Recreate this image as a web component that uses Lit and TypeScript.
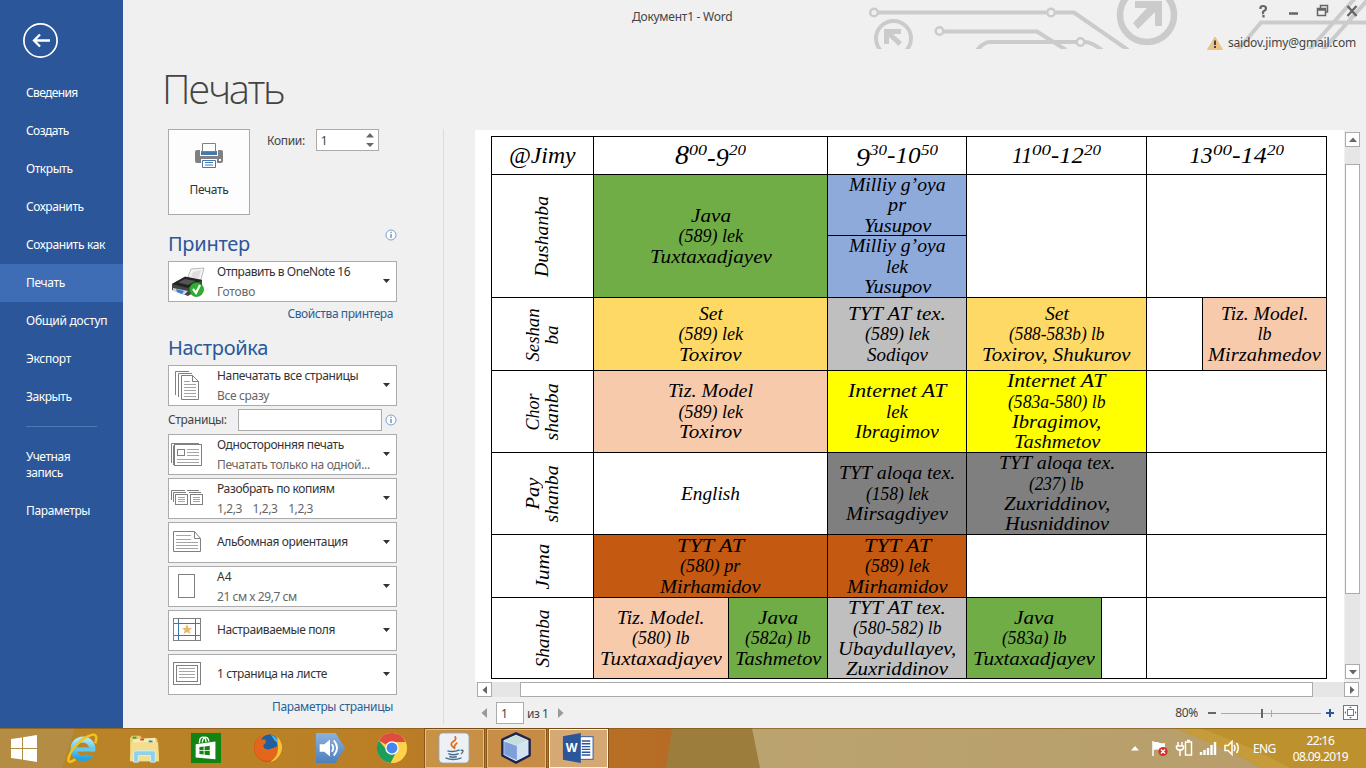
import { LitElement, html, svg, css, nothing } from "lit";
import { customElement, property, query } from "lit/decorators.js";

/** One line of text that takes exactly `w` pixels, by tracking or by stretching its letters. */
@customElement("fit-text")
class FitText extends LitElement {
  @property({ type: Number }) w = 0;
  @property() t = "";
  @property({ type: Boolean }) stretch = false;
  @query("span") span!: HTMLElement;
  static styles = css`
    :host { display: inline-block; white-space: pre; }
    span { display: inline-block; transform-origin: 0 50%; }
  `;
  updated() {
    this.style.letterSpacing = "0px";
    const natural = this.span.offsetWidth;
    if (!this.w || !natural) return;
    if (this.stretch) {
      this.style.width = this.w + "px";
      this.span.style.transform = `scaleX(${this.w / natural})`;
    } else {
      this.style.letterSpacing = (this.w - natural) / this.t.length + "px";
    }
  }
  render() {
    return html`<span>${this.t}</span>`;
  }
}

type Line = [string, number];
const fit = (l: Line) => html`<fit-text .t=${l[0]} .w=${l[1]}></fit-text>`;
const wide = (l: Line, cls = "") => html`<fit-text class=${cls} stretch .t=${l[0]} .w=${l[1]}></fit-text>`;

@customElement("side-bar")
class SideBar extends LitElement {
  static styles = css`
    :host { display: block; width: 123px; height: 728px; background: #2b579a; color: #fff; font: 12px/16px "Noto Sans", sans-serif; }
    .back { display: block; padding: 22px 0 14px 22px; }
    .item { height: 38px; padding-left: 26px; display: flex; align-items: center; }
    .item.on { background: #3e6db5; }
    .rule { height: 1px; background: #5078b3; margin: 10px 26px 22px; }
    .two { display: flex; flex-direction: column; align-items: flex-start; padding-left: 26px; height: 43px; }
  `;
  render() {
    const items: Line[] = [["Сведения", 52], ["Создать", 43], ["Открыть", 47], ["Сохранить", 58], ["Сохранить как", 79], ["Печать", 39], ["Общий доступ", 81], ["Экспорт", 45], ["Закрыть", 46]];
    return html`
      <svg class="back" width="38" height="38" viewBox="0 0 38 38" fill="none" stroke="#fff">
        <circle cx="18.5" cy="18.5" r="16.6" stroke-width="1.7" />
        <path d="M28 18.500H12M18 12.500L12 18.500L18 24.500" stroke-width="2.300" />
      </svg>
      ${items.map((i) => html`<div class="item ${i[0] === "Печать" ? "on" : ""}">${fit(i)}</div>`)}
      <div class="rule"></div>
      <div class="two">${fit(["Учетная", 44])}${fit(["запись", 37])}</div>
      <div class="item">${fit(["Параметры", 64])}</div>
    `;
  }
}

@customElement("title-bar")
class TitleBar extends LitElement {
  static styles = css`
    :host { display: block; position: relative; height: 64px; color: #444; font: 12px/16px "Noto Sans", sans-serif; }
    .deco { position: absolute; right: 0; top: 0; }
    .row { position: relative; display: flex; height: 33px; align-items: center; }
    .name { margin-left: 509px; }
    .ctl { margin-left: auto; margin-right: 6px; margin-top: -10px; }
    .user { position: relative; display: flex; justify-content: flex-end; align-items: center; padding-right: 10px; gap: 5px; height: 19px; }
  `;
  render() {
    return html`
      <svg class="deco" width="506" height="49" viewBox="0 0 506 49" fill="none" stroke="#cbcbcb" stroke-width="4">
        <path d="M18 12.500H186M196 12.500H214L268 50" />
        <circle cx="14" cy="12.500" r="3.800" stroke-width="2.500" /><circle cx="191" cy="12.500" r="3.800" stroke-width="2.500" />
        <path d="M84 31.500H177L206 50" /><circle cx="79.500" cy="31" r="3.800" stroke-width="2.500" />
        <path d="M117 50Q124 42 130 42H216M225 42Q231 42 242 50" /><circle cx="220.500" cy="42" r="3.800" stroke-width="2.500" />
        <circle cx="33.500" cy="38.500" r="17.500" />
        <g fill="#cbcbcb" stroke="none">
          <path d="M24 29H41V34H33L42 42L38.500 46L29 37V44H24Z" />
          <path d="M275 1H302V26H295V12L278 29L273 23L287 8H275Z" />
        </g>
        <circle cx="287" cy="15" r="27" stroke-width="6.500" />
        <path d="M378 50L401 22.500H506M449 50L497 -4M463 50L511 -4" />
      </svg>
      <div class="row">
        <span class="name">${fit(["Документ1 - Word", 100])}</span>
        <svg class="ctl" width="102" height="16" viewBox="0 0 102 16" fill="none" stroke="#666" stroke-width="1.500">
          <path d="M2.500 5V3.500Q2.500 2 5 2Q8 2 8 4.500Q8 6 6 7T5.500 10M5.500 11V13.500" stroke-width="2.200" />
          <path d="M31 9.500H40" stroke-width="2.500" />
          <path d="M59.500 4.500H67.500V11.500H59.500ZM62.500 4V1.500H69.500V8H68M60 6H67" />
          <path d="M89.500 2L98.500 12M98.500 2L89.500 12" stroke-width="2.400" />
        </svg>
      </div>
      <div class="user">
        <svg width="16" height="14" viewBox="0 0 16 14"><path d="M8 1L15.500 13.500H.5Z" fill="#ebc382" stroke="#ebc382" stroke-linejoin="round" /><path d="M8 4.500V9M8 10V12" stroke="#444" stroke-width="2" /></svg>
        ${fit(["saidov.jimy@gmail.com", 128])}
      </div>
    `;
  }
}

const page = (x: number, y: number, w: number, h: number) =>
  svg`<rect x=${x + 0.5} y=${y + 0.5} width=${w} height=${h} fill="#fff" stroke="#808080"/>`;

const icons: Record<string, unknown> = {
  printer: svg`<g transform="translate(0 6)">
    <path d="M17 10L20 2L33 1L29 16Z" fill="#f4f4f4" stroke="#aaa" stroke-width=".8"/><path d="M19 12L22 5L30 3L27 14Z" fill="#ddd"/>
    <path d="M1 17L14 9.500L31 13V20L17 29L1 23Z" fill="#444"/><path d="M1 17L14 10L31 13L17 21Z" fill="#222"/><path d="M7 15.500L14 12L25 14L17 18Z" fill="#555"/>
    <path d="M2 21L17 24L13 28L2 24Z" fill="#c9d6ea"/><path d="M5 22L13 24L11 27L6 25Z" fill="#3b7dcc"/>
    <circle cx="25.500" cy="22.500" r="7" fill="#2fae2f" stroke="#178b17" stroke-width=".7"/><path d="M22 22L25 26L29 18" fill="none" stroke="#fff" stroke-width="2.200"/></g>`,
  pages: svg`<g fill="none" stroke="#808080" transform="translate(0 2)"><path d="M4.500 28V4.500H18M7.500 30V6.500H21M10.500 31.500V8.500"/><path d="M10.500 8.500H21.500L27.500 14.500V32.500H10.500ZM21.500 8.500V14.500H27.500" fill="#fff"/><path d="M13 14.500H19M13 17.500H25M13 20.500H25M13 23.500H25M13 26.500H25M13 29.500H25" stroke="#a5a5a5"/></g>`,
  onesided: svg`<g fill="none" stroke="#808080" transform="translate(0 3)"><path d="M.5 26V6.500H28M2.500 28V8.500"/><rect x="3.500" y="7.500" width="27" height="21" fill="#fff"/><rect x="6.500" y="12.500" width="7" height="6"/><path d="M16 12.500H28M16 15.500H28M16 18.500H28M6 22.500H28M6 25.500H28" stroke="#a5a5a5"/></g>`,
  collate: svg`<g fill="none" stroke="#808080" transform="translate(0 3)"><path d="M.5 19V9.500H14M2.500 21V11.500H15M16 9.500H28M18 11.500H30"/>${page(4, 13, 12, 10)}${page(19, 13, 12, 10)}<path d="M7 16.500H14M7 18.500H14M7 20.500H14M22 16.500H29M22 18.500H29M22 20.500H29" stroke="#a5a5a5"/></g>`,
  landscape: svg`<g fill="none" stroke="#808080" transform="translate(0 1)"><path d="M2.500 8.500H23.500L29.500 15.500V28.500H2.500ZM23.500 8.500V15.500H29.500"/><path d="M5 12.500H20M5 16.500H20M5 19.500H27M5 22.500H27M5 25.500H27" stroke="#a5a5a5"/></g>`,
  sheet: page(7, 8, 16, 23),
  margins: svg`<g transform="translate(0 1)">${page(2, 7, 27, 22)}<path d="M3 12.500H29M3 24.500H29M7.500 8V29M24.500 8V29" stroke="#3b7aa8"/><path d="M16 13L17.500 17H21L18.300 19.400L19.400 23L16 21L12.600 23L13.700 19.400L11 17H14.500Z" fill="#eab86a"/></g>`,
  onepage: svg`<g transform="translate(0 1)">${page(2, 7, 27, 22)}${page(5, 10, 21, 16)}<path d="M8 13.500H24M8 16.500H24M8 19.500H24M8 22.500H24" stroke="#a5a5a5"/></g>`,
};

@customElement("option-box")
class OptionBox extends LitElement {
  @property() icon = "";
  @property({ attribute: false }) a: Line = ["", 0];
  @property({ attribute: false }) b?: Line;
  static styles = css`
    :host { display: flex; box-sizing: border-box; width: 229px; height: 41px; border: 1px solid #ababab; background: #fff; color: #333; font: 12px/20px "Noto Sans", sans-serif; }
    .ico { flex: none; margin: -1px 12px 0 2px; }
    .tx { flex: 1; display: flex; flex-direction: column; align-items: flex-start; }
    .tx.single { padding-top: 9px; }
    .sub { color: #666; }
    .arr { margin: 17px 6px 0 0; }
  `;
  render() {
    return html`
      <svg class="ico" width="34" height="40" viewBox="0 0 34 40">${icons[this.icon]}</svg>
      <div class="tx ${this.b ? "" : "single"}">${fit(this.a)}${this.b ? html`<span class="sub">${fit(this.b)}</span>` : nothing}</div>
      <svg class="arr" width="7" height="4" viewBox="0 0 7 4"><path d="M0 0H7L3.500 4Z" fill="#333" /></svg>
    `;
  }
}

const info = html`<svg width="12" height="12" viewBox="0 0 12 12"><circle cx="6" cy="6" r="5" fill="#fff" stroke="#7d9fcc" /><path d="M6 5V9M6 2.700V4" stroke="#4c7ab5" stroke-width="1.200" /></svg>`;

@customElement("print-settings")
class PrintSettings extends LitElement {
  static styles = css`
    :host { display: block; width: 229px; padding-left: 45px; color: #444; font: 12px/16px "Noto Sans", sans-serif; }
    .title { margin: 0 0 0 -6px; font: 300 40px/50px "Open Sans", "Noto Sans", sans-serif; height: 65px; }
    .top { display: flex; height: 86px; }
    .btn { box-sizing: border-box; width: 82px; height: 86px; background: #fdfdfd; border: 1px solid #ababab; display: flex; flex-direction: column; align-items: center; padding-top: 13px; gap: 13px; color: #333; }
    .lab { margin: 4px 11px 0 17px; }
    .num { box-sizing: border-box; width: 63px; height: 22px; border: 1px solid #ababab; background: #fff; display: flex; justify-content: space-between; padding: 3px 4px 0 4px; }
    .head { display: flex; justify-content: space-between; align-items: flex-start; color: #2b579a; font: 20px/30px "Noto Sans", sans-serif; }
    .h1 { height: 32px; margin-top: 14px; }
    .h2 { height: 32px; }
    .link { display: flex; justify-content: flex-end; padding-right: 4px; color: #2b6094; }
    .l1 { height: 27px; padding-top: 4px; }
    .l2 { padding-top: 4px; }
    .pages { display: flex; height: 22px; margin: 3px 0; align-items: center; justify-content: space-between; }
    .field { box-sizing: border-box; width: 144px; height: 22px; border: 1px solid #ababab; background: #fff; margin-left: 11px; margin-right: 3px; }
    .gap { display: flex; flex-direction: column; gap: 3px; }
  `;
  render() {
    return html`
      <div class="title">${fit(["Печать", 122])}</div>
      <div class="top">
        <div class="btn">
          <svg width="30" height="26" viewBox="0 0 30 26">
            <path d="M3 7H27Q29 7 29 9V18Q29 20 27 20H3Q1 20 1 18V9Q1 7 3 7Z" fill="#808080" />
            <path d="M6 6H24V13H6Z" fill="#fdfdfd" /><path d="M7 8H23V12H7Z" fill="#4379ae" />
            <path d="M8.500 .5H21.500V8.500H8.500Z" fill="#fff" stroke="#808080" />
            <path d="M7 16H23V26H7Z" fill="#fdfdfd" /><path d="M8.500 17.500H21.500V24.500H8.500Z" fill="#fff" stroke="#4379ae" />
            <path d="M11 19.500H19M11 22H19" stroke="#4379ae" /><rect x="25" y="16" width="2" height="2" fill="#fff" />
          </svg>
          ${fit(["Печать", 39])}
        </div>
        <span class="lab">${fit(["Копии:", 38])}</span>
        <div class="num"><span>1</span><svg width="8" height="14" viewBox="0 0 8 14"><path d="M0 4.500L4 0L8 4.500ZM0 10L4 14L8 10Z" fill="#666" /></svg></div>
      </div>
      <div class="head h1">${fit(["Принтер", 82])}${info}</div>
      <option-box icon="printer" .a=${["Отправить в OneNote 16", 133]} .b=${["Готово", 38]}></option-box>
      <div class="link l1">${fit(["Свойства принтера", 106])}</div>
      <div class="head h2">${fit(["Настройка", 100])}</div>
      <option-box icon="pages" .a=${["Напечатать все страницы", 141]} .b=${["Все сразу", 52]}></option-box>
      <div class="pages">${fit(["Страницы:", 59])}<div class="field"></div>${info}</div>
      <div class="gap">
        <option-box icon="onesided" .a=${["Односторонняя печать", 127]} .b=${["Печатать только на одной...", 153]}></option-box>
        <option-box icon="collate" .a=${["Разобрать по копиям", 118]} .b=${["1,2,3    1,2,3    1,2,3", 96]}></option-box>
        <option-box icon="landscape" .a=${["Альбомная ориентация", 131]}></option-box>
        <option-box icon="sheet" .a=${["A4", 15]} .b=${["21 см x 29,7 см", 80]}></option-box>
        <option-box icon="margins" .a=${["Настраиваемые поля", 118]}></option-box>
        <option-box icon="onepage" .a=${["1 страница на листе", 110]}></option-box>
      </div>
      <div class="link l2">${fit(["Параметры страницы", 121])}</div>
    `;
  }
}

const cell = (cls: string, ...lines: Line[]) => html`<div class="cell ${cls}">${lines.map((l) => wide(l))}</div>`;
const day = (...lines: Line[]) => html`<div class="cell"><div class="turn">${lines.map((l) => wide(l))}</div></div>`;
/** Tall figures rise above the line, "low" ones hang below it, the rest are of lowercase height. */
const hour = (a: Line, ac: string, b: Line, c: Line, cc: string, d: Line) =>
  html`<div class="cell hour"><span class="hr">${wide(a, ac)}<sup>${wide(b)}</sup>${wide(c, cc)}<sup>${wide(d)}</sup></span></div>`;

@customElement("time-table")
class TimeTable extends LitElement {
  static styles = css`
    :host { display: grid; width: 834px; padding: 1px; gap: 1px; background: #000; color: #000;
      grid-template-columns: 101px 233px 138px 179px 179px; grid-template-rows: 37px 122px 72px 81px 81px 62px 80px;
      font: italic 18px/20.4px "Liberation Serif", serif; }
    .cell { box-sizing: border-box; padding-top: 1px; background: #fff; display: flex; flex-direction: column; align-items: center; justify-content: center; min-width: 0; min-height: 0; overflow: hidden; }
    .split { display: grid; gap: 1px; min-height: 0; }
    .v { grid-template-rows: 60px 61px; }
    .s1 { grid-template-columns: 55px 123px; }
    .s2 { grid-template-columns: 134px 98px; }
    .s3 { grid-template-columns: 134px 44px; }
    .turn { transform: rotate(-90deg); display: flex; flex-direction: column; align-items: center; line-height: 19px; flex: none; }
    .jimy { font-size: 23px; }
    .hour { font-size: 23px; line-height: 34px; }
    .hr { display: flex; align-items: center; }
    .tall { font-size: 28px; margin-top: -3px; }
    .low { font-size: 26px; margin-top: 4px; }
    .hour sup { font-size: 14px; line-height: 16px; margin: -11px 0 0; vertical-align: baseline; }
    .green { background: #70ad47; }
    .blue { background: #8eaadb; }
    .gold { background: #ffd966; }
    .silver { background: #bfbfbf; }
    .peach { background: #f7caac; }
    .yellow { background: #ffff00; }
    .gray { background: #7f7f7f; }
    .rust { background: #c45911; }
  `;
  render() {
    return html`
      ${cell("jimy", ["@Jimy", 67])}
      ${hour(["8", 14], "tall", ["00", 18], ["-9", 22], "low", ["20", 17])}
      ${hour(["9", 14], "low", ["30", 17], ["-10", 34], "", ["50", 17])}
      ${hour(["11", 20], "", ["00", 19], ["-12", 33], "", ["20", 17])}
      ${hour(["13", 23], "", ["00", 19], ["-14", 35], "", ["20", 17])}

      ${day(["Dushanba", 81])}
      ${cell("green", ["Java", 40], ["(589) lek", 64], ["Tuxtaxadjayev", 122])}
      <div class="split v">
        ${cell("blue", ["Milliy g’oya", 96], ["pr", 18], ["Yusupov", 67])}
        ${cell("blue", ["Milliy g’oya", 96], ["lek", 22], ["Yusupov", 67])}
      </div>
      ${cell("")}${cell("")}

      ${day(["Seshan", 53], ["ba", 19])}
      ${cell("gold", ["Set", 24], ["(589) lek", 64], ["Toxirov", 63])}
      ${cell("silver", ["TYT AT tex.", 98], ["(589) lek", 64], ["Sodiqov", 61])}
      ${cell("gold", ["Set", 24], ["(588-583b) lb", 95], ["Toxirov, Shukurov", 149])}
      <div class="split s1">${cell("")}${cell("peach", ["Tiz. Model.", 88], ["lb", 14], ["Mirzahmedov", 113])}</div>

      ${day(["Chor", 37], ["shanba", 57])}
      ${cell("peach", ["Tiz. Model", 85], ["(589) lek", 64], ["Toxirov", 63])}
      ${cell("yellow", ["Internet AT", 99], ["lek", 22], ["Ibragimov", 84])}
      ${cell("yellow", ["Internet AT", 99], ["(583a-580) lb", 97], ["Ibragimov,", 89], ["Tashmetov", 86])}
      ${cell("")}

      ${day(["Pay", 32], ["shanba", 57])}
      ${cell("", ["English", 59])}
      ${cell("gray", ["TYT aloqa tex.", 116], ["(158) lek", 62], ["Mirsagdiyev", 102])}
      ${cell("gray", ["TYT aloqa tex.", 116], ["(237) lb", 55], ["Zuxriddinov,", 106], ["Husniddinov", 104])}
      ${cell("")}

      ${day(["Juma", 46])}
      ${cell("rust", ["TYT AT", 67], ["(580) pr", 61], ["Mirhamidov", 101])}
      ${cell("rust", ["TYT AT", 67], ["(589) lek", 64], ["Mirhamidov", 101])}
      ${cell("")}${cell("")}

      ${day(["Shanba", 58])}
      <div class="split s2">
        ${cell("peach", ["Tiz. Model.", 88], ["(580) lb", 58], ["Tuxtaxadjayev", 122])}
        ${cell("green", ["Java", 40], ["(582a) lb", 66], ["Tashmetov", 86])}
      </div>
      ${cell("silver", ["TYT AT tex.", 98], ["(580-582) lb", 88], ["Ubaydullayev,", 118], ["Zuxriddinov", 102])}
      <div class="split s3">${cell("green", ["Java", 40], ["(583a) lb", 65], ["Tuxtaxadjayev", 122])}${cell("")}</div>
      ${cell("")}
    `;
  }
}

const tri = (d: string) => html`<div class="sb"><svg width="8" height="8" viewBox="0 0 8 8"><path d=${d} fill="#666" /></svg></div>`;
const L = "M6 0V8L1.500 4Z", R = "M2 0V8L6.500 4Z", U = "M0 6H8L4 1.500Z", D = "M0 2H8L4 6.500Z";

@customElement("preview-pane")
class PreviewPane extends LitElement {
  static styles = css`
    :host { display: flex; flex-direction: column; width: 891px; color: #444; font: 12px/16px "Noto Sans", sans-serif; }
    .view { display: flex; height: 552px; }
    .paper { width: 869px; box-sizing: border-box; padding: 6px 0 0 16px; background: #fff; }
    .sb { box-sizing: border-box; width: 15px; height: 15px; border: 1px solid #ababab; background: #fff; display: flex; align-items: center; justify-content: center; flex: none; }
    .vs { width: 15px; margin: 2px 0 3px 1px; background: #e6e6e6; display: flex; flex-direction: column; }
    .vt { box-sizing: border-box; height: 430px; margin: 17px 0 auto; border: 1px solid #ababab; background: #fff; }
    .hs { display: flex; width: 882px; height: 15px; margin-left: 2px; background: #e6e6e6; }
    .ht { box-sizing: border-box; width: 793px; margin: 0 auto 0 28px; border: 1px solid #ababab; background: #fff; }
    .foot { display: flex; align-items: center; height: 22px; margin-top: 5px; padding: 0 8px 0 6px; }
    .pn { box-sizing: border-box; width: 28px; height: 22px; border: 1px solid #ababab; background: #fff; margin: 0 3px 0 8px; padding: 3px 4px; }
    .of { padding-top: 2px; }
    .pct { margin-left: auto; margin-right: 9px; }
    .nx { margin-left: 9px; }
  `;
  render() {
    return html`
      <div class="view">
        <div class="paper"><time-table></time-table></div>
        <div class="vs">${tri(U)}<div class="vt"></div>${tri(D)}</div>
      </div>
      <div class="hs">${tri(L)}<div class="ht"></div>${tri(R)}</div>
      <div class="foot">
        <svg width="7" height="10" viewBox="0 0 7 10"><path d="M6 0V10L.5 5Z" fill="#999" /></svg>
        <div class="pn">1</div><span class="of">${fit(["из 1", 21])}</span>
        <svg class="nx" width="7" height="10" viewBox="0 0 7 10"><path d="M1 0V10L6.500 5Z" fill="#999" /></svg>
        <span class="pct">${fit(["80%", 23])}</span>
        <svg width="151" height="16" viewBox="0 0 151 16" fill="none">
          <path d="M1 8H9" stroke="#666" stroke-width="2" /><path d="M14 8.500H114M64.500 5V12" stroke="#aaa" />
          <path d="M55 4V13" stroke="#666" stroke-width="2" /><path d="M119 8H127M123 4V12" stroke="#2b579a" stroke-width="2" />
          <rect x="136.500" y=".5" width="14" height="14" fill="#fff" stroke="#777" /><rect x="140.500" y="4.500" width="6" height="6" stroke="#777" />
          <path d="M142 3L143.500 1.500L145 3ZM142 12L143.500 13.500L145 12ZM139 6L137.500 7.500L139 9ZM148 6L149.500 7.500L148 9Z" fill="#3b7ab8" />
        </svg>
      </div>
    `;
  }
}

const app = (cls: string, art: unknown) => html`<div class="app"><div class=${cls}><svg width="34" height="34" viewBox="0 0 34 34">${art}</svg></div></div>`;

@customElement("task-bar")
class TaskBar extends LitElement {
  static styles = css`
    :host { display: flex; position: relative; height: 40px; color: #fff; font: 12px/16px "Noto Sans", sans-serif; overflow: hidden; }
    .wall { position: absolute; left: 0; top: 0; }
    .apps, .tray { position: relative; display: flex; align-items: center; }
    .win { width: 51px; display: flex; justify-content: center; padding-right: 3px; box-sizing: border-box; }
    .app { width: 62px; height: 40px; display: flex; justify-content: center; align-items: center; }
    .open, .active, .idle { box-sizing: border-box; width: 59px; height: 39px; display: flex; align-items: center; justify-content: center; }
    .open svg, .active svg { width: 32px; height: 32px; }
    .idle svg { width: 32px; height: 32px; }
    .open { border: 1px solid #dcc08a; background: rgba(255, 240, 205, 0.2); outline: 1px solid rgba(90, 55, 10, 0.5); }
    .active { border: 1px solid #fff3d8; background: rgba(255, 245, 225, 0.42); outline: 1px solid rgba(90, 55, 10, 0.5); }
    .tray { margin-left: auto; }
    .lang { margin-left: 13px; padding-top: 2px; }
    .clock { display: flex; flex-direction: column; align-items: center; margin: 2px 18px 0 17px; }
  `;
  render() {
    return html`
      <svg class="wall" width="1366" height="40" viewBox="0 0 1366 40">
        <defs>
          <linearGradient id="a"><stop offset="0" stop-color="#b88428" /><stop offset=".5" stop-color="#bb8025" /><stop offset="1" stop-color="#b66b25" /></linearGradient>
          <linearGradient id="b"><stop offset="0" stop-color="#c2ab77" /><stop offset="1" stop-color="#b69d69" /></linearGradient>
        </defs>
        <rect width="1366" height="40" fill="url(#b)" /><path d="M0 0H680L666 40H0Z" fill="url(#a)" />
        <path d="M0 0H75L62 40H0Z" fill="#b58c44" /><path d="M672 0H752L760 40H666Z" fill="#9c7d3b" />
        <path d="M1174 0H1366V40H1262Q1222 18 1174 0Z" fill="#bd912d" /><path d="M1174 0H1200Q1250 18 1290 40H1262Q1222 18 1174 0Z" fill="#c59c39" />
        <rect width="1366" height="1" fill="#7a5015" opacity=".6" />
      </svg>
      <div class="apps">
        <div class="win"><svg width="28" height="27" viewBox="0 0 28 27" fill="#fff"><path d="M1 4L12 2.400V13H1ZM13 2.200L27 0V13H13ZM1 14H12V24.600L1 23ZM13 14H27V27L13 24.800Z" /></svg></div>
        ${app("idle", svg`<defs><linearGradient id="ie" x2="0" y2="1"><stop offset="0" stop-color="#a5e9fb"/><stop offset="1" stop-color="#27a2dc"/></linearGradient></defs>
          <circle cx="18" cy="18" r="10" fill="none" stroke="url(#ie)" stroke-width="6.500"/><path d="M10 18.500H31" stroke="#62c8ee" stroke-width="4.500"/><path d="M22 21H33V25H23Z" fill="#b88428"/>
          <path d="M31 12C34 4 31 1 25 4C14 8 4 20 2.500 29C2 33 6 32 10 29" fill="none" stroke="#f6c21c" stroke-width="2.600"/>`)}
        ${app("idle", svg`<path d="M2 7L4 4H13L15 7H31L33 31H3Z" fill="#e9cb72"/><path d="M5 8L29 6L31 30H4Z" fill="#f8ecb0"/><path d="M3 11H32L33 31H2Z" fill="#f5dd8e"/><path d="M5 5H9V7H5Z" fill="#27a344"/><path d="M13 7H17V9H13Z" fill="#d84b32"/><path d="M22 9H26V11H22Z" fill="#3386cc"/>
          <path d="M6 32V22Q6 20 8 20H27Q29 20 29 22V32H24V25H11V32Z" fill="#8fd0ea" stroke="#d5f1fa"/>`)}
        ${app("idle", svg`<rect x="1" y="1" width="32" height="32" fill="#118411"/><path d="M6 13L27 10V29L6 27Z" fill="#fff"/><path d="M10 12Q10 5 14 5.500Q17 6 17 11M13 11Q14 4 18 6Q20 7 20 10" fill="none" stroke="#fff" stroke-width="1.500"/><path d="M10 16L14.500 15.500V19.300H10ZM15.500 15.400L21 14.700V19.300H15.500ZM10 20.300H14.500V24L10 23.500ZM15.500 20.300H21V24.800L15.500 24.100Z" fill="#118411"/>`)}
        ${app("idle", svg`<defs><radialGradient id="fx" cx=".6" cy=".3"><stop offset="0" stop-color="#fbd33b"/><stop offset=".55" stop-color="#f28a1f"/><stop offset="1" stop-color="#d84d18"/></radialGradient></defs>
          <circle cx="17" cy="17" r="15" fill="url(#fx)"/><circle cx="18.500" cy="12.500" r="10" fill="#225f9e"/><path d="M20 3Q27 5 28 12L24 9Z" fill="#48b3dd"/><path d="M2.500 15Q4 9 7 5L10 8H14L15 11L12 14Q12 18 17 18.500Q23 18 27 15Q31 22 25 28Q17 33 9 29Q2 24 2.500 15Z" fill="#e3661d"/><path d="M27 5Q35 14 30 24Q26 31 19 32Q30 25 27 13Z" fill="#f6c536"/>`)}
        ${app("idle", svg`<defs><linearGradient id="sp" x2="0" y2="1"><stop offset="0" stop-color="#8bb2df"/><stop offset="1" stop-color="#4d7fbb"/></linearGradient></defs><path d="M2 1H23L33 17L23 33H2Z" fill="url(#sp)"/><path d="M6 13H11L17 8V26L11 21H6Z" fill="#fff"/><path d="M19 13Q22 17 19 21M21 9Q28 17 21 25" fill="none" stroke="#fff" stroke-width="2"/>`)}
        ${app("idle", svg`<circle cx="17" cy="17" r="16" fill="#ffd24a"/><path d="M17 17L3 9A16 16 0 0 1 31.500 10.500H17Z" fill="#df4b3f"/><path d="M3 9A16 16 0 0 0 15.500 33L22 20H12Z" fill="#1d9c5a"/><circle cx="17" cy="17" r="7.200" fill="#fff"/><circle cx="17" cy="17" r="5.800" fill="#4684ee"/>`)}
        ${app("open", svg`<rect x="1" y="1" width="32" height="32" rx="4" fill="#edf1f5" stroke="#98a4ad"/><path d="M17 17Q11 13 17 9.500Q20 7.500 18 4.500M18 18Q16 15 20.500 11.500" fill="none" stroke="#e46b1b" stroke-width="1.900"/><path d="M10 20Q16 22 23 19M11 23Q16 25.500 22 23M8 27.500Q16 31 25 27.500M24 19.500Q29 18.500 24.500 23.500M12 26Q16 27.500 20 26" fill="none" stroke="#456f90" stroke-width="1.500"/>`)}
        ${app("open", svg`<path d="M17 1.500L31.500 8V25L17 32.500L2.500 25V8Z" fill="#dbe8f4" stroke="#1d2350" stroke-width="2.500" stroke-linejoin="round"/><path d="M5 9L17 3.500L29 9L18 14Z" fill="#c4dfd9"/><path d="M4.500 10L18 15V30L4.500 24Z" fill="#7f9fda"/><path d="M18 15L29.500 10V24L18 30Z" fill="#d3e3f3"/>`)}
        ${app("active", svg`<rect x="18" y="5" width="15" height="24" fill="#fff" stroke="#2b579a"/><path d="M21 9.500H30M21 12.500H30M21 15.500H30M21 18.500H30M21 21.500H30M21 24.500H30" stroke="#2b579a" stroke-width="1.500"/><path d="M1 4.500L20 1V33L1 29.500Z" fill="#2b579a"/><text x="4" y="21.500" font-size="13" font-weight="700" fill="#fff" font-family="Noto Sans" textLength="12.500" lengthAdjust="spacingAndGlyphs">W</text>`)}
      </div>
      <div class="tray">
        <svg width="110" height="18" viewBox="0 0 110 18" fill="none" stroke="#fff" stroke-width="1.500">
          <path d="M1 11.500H9L5 7Z" fill="#fff" stroke="none" />
          <path d="M23 2V17" /><path d="M23 3H28Q30 5 35 4V11H30Q27 10 23 11Z" fill="#fff" stroke="none" />
          <circle cx="33" cy="12.500" r="4.600" fill="#d32f2f" stroke="none" /><path d="M31 10.500L35 14.500M35 10.500L31 14.500" />
          <path d="M48 3V7M52 3V7M46.500 7H53.500V9Q53 11 50 11Q47 11 46.500 9ZM50 11V17" /><rect x="55.500" y="3" width="6" height="13" /><path d="M57 1.500H60" />
          <path d="M71 16V13M74.500 16V11M78 16V9M81.500 16V6M85 16V3" stroke-width="2.400" />
          <path d="M95 6.500H98L102 2.500V15.500L98 11.500H95Z" /><path d="M104 6Q106 9 104 12M106.500 4Q110 9 106.500 14" />
        </svg>
        <span class="lang">${fit(["ENG", 23])}</span>
        <div class="clock">${fit(["22:16", 28])}${fit(["08.09.2019", 55])}</div>
      </div>
    `;
  }
}

@customElement("app-root")
class AppRoot extends LitElement {
  static styles = css`
    :host { display: block; width: 1366px; height: 768px; overflow: hidden; background: #f0f0f0; }
    .top { display: flex; height: 728px; }
    .main { flex: 1; display: flex; flex-direction: column; }
    .body { display: flex; height: 664px; }
    .sep { width: 1px; height: 595px; background: #dcdcdc; margin: 65px 31px 0 46px; }
    .pv { padding-top: 66px; }
  `;
  render() {
    return html`
      <div class="top">
        <side-bar></side-bar>
        <div class="main">
          <title-bar></title-bar>
          <div class="body">
            <print-settings></print-settings>
            <div class="sep"></div>
            <div class="pv"><preview-pane></preview-pane></div>
          </div>
        </div>
      </div>
      <task-bar></task-bar>
    `;
  }
}
